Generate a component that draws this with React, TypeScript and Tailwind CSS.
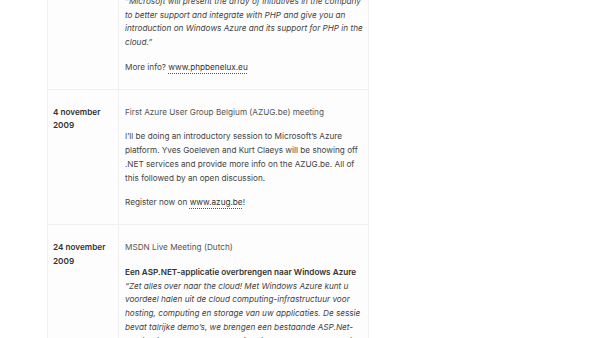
const rows = [
  {
    date: ["18 november", "2009"],
    body: (
      <>
        <p className="mb-[11px] text-[#555]">PHPBenelux meeting</p>
        <p className="mb-[11px] italic">
          “Microsoft will present the array of initiatives in the company to better support and integrate with PHP and
          give you an introduction on Windows Azure and its support for PHP in the cloud.”
        </p>
        <p>
          More info? <Link href="#">www.phpbenelux.eu</Link>
        </p>
      </>
    ),
  },
  {
    date: ["4 november", "2009"],
    body: (
      <>
        <p className="mb-[11px] text-[#555]">First Azure User Group Belgium (AZUG.be) meeting</p>
        <p className="mb-[11px]">
          I’ll be doing an introductory session to Microsoft’s Azure platform. Yves Goeleven and Kurt Claeys will be
          showing off .NET services and provide more info on the AZUG.be. All of this followed by an open discussion.
        </p>
        <p>
          Register now on <Link href="#">www.azug.be</Link>!
        </p>
      </>
    ),
  },
  {
    date: ["24 november", "2009"],
    body: (
      <>
        <p className="mb-[11px] text-[#555]">MSDN Live Meeting (Dutch)</p>
        <p className="mb-[11px]">
          <strong className="font-semibold text-[#333]">Een ASP.NET-applicatie overbrengen naar Windows Azure</strong>
          <br />
          <em>
            “Zet alles over naar the cloud! Met Windows Azure kunt u voordeel halen uit de cloud
            computing-infrastructuur voor hosting, computing en storage van uw applicaties. De sessie bevat talrijke
            demo’s, we brengen een bestaande ASP.Net-applicatie over naar the cloud in Windows Azure en gaan in op
            storage.”
          </em>
        </p>
      </>
    ),
  },
];

function Link({ href, children }: { href: string; children: React.ReactNode }) {
  return (
    <a
      href={href}
      className="text-[#333] underline decoration-dotted decoration-[#555] underline-offset-[3px]"
    >
      {children}
    </a>
  );
}

export default function App() {
  return (
    <div className="h-[338px] w-[600px] overflow-hidden bg-white font-['Inter',sans-serif] text-[8.2px] leading-[13.75px] text-[#444]">
      <table className="ml-[47px] mt-[-47px] w-[322px] border-collapse">
        <tbody>
          {rows.map((row, i) => (
            <tr key={i} className="border-y border-[#f0f0f0]">
              <td className="w-[71px] border-x border-[#f0f0f0] bg-[#fdfdfd] pl-[5px] pr-[4px] pt-4 pb-[14px] align-top font-semibold text-[#333]">
                {row.date[0]}
                <br />
                {row.date[1]}
              </td>
              <td className="border-x border-[#f0f0f0] bg-[#fdfdfd] pl-[6px] pr-[3px] pt-4 pb-[14px] align-top">
                {row.body}
              </td>
            </tr>
          ))}
        </tbody>
      </table>
    </div>
  );
}
